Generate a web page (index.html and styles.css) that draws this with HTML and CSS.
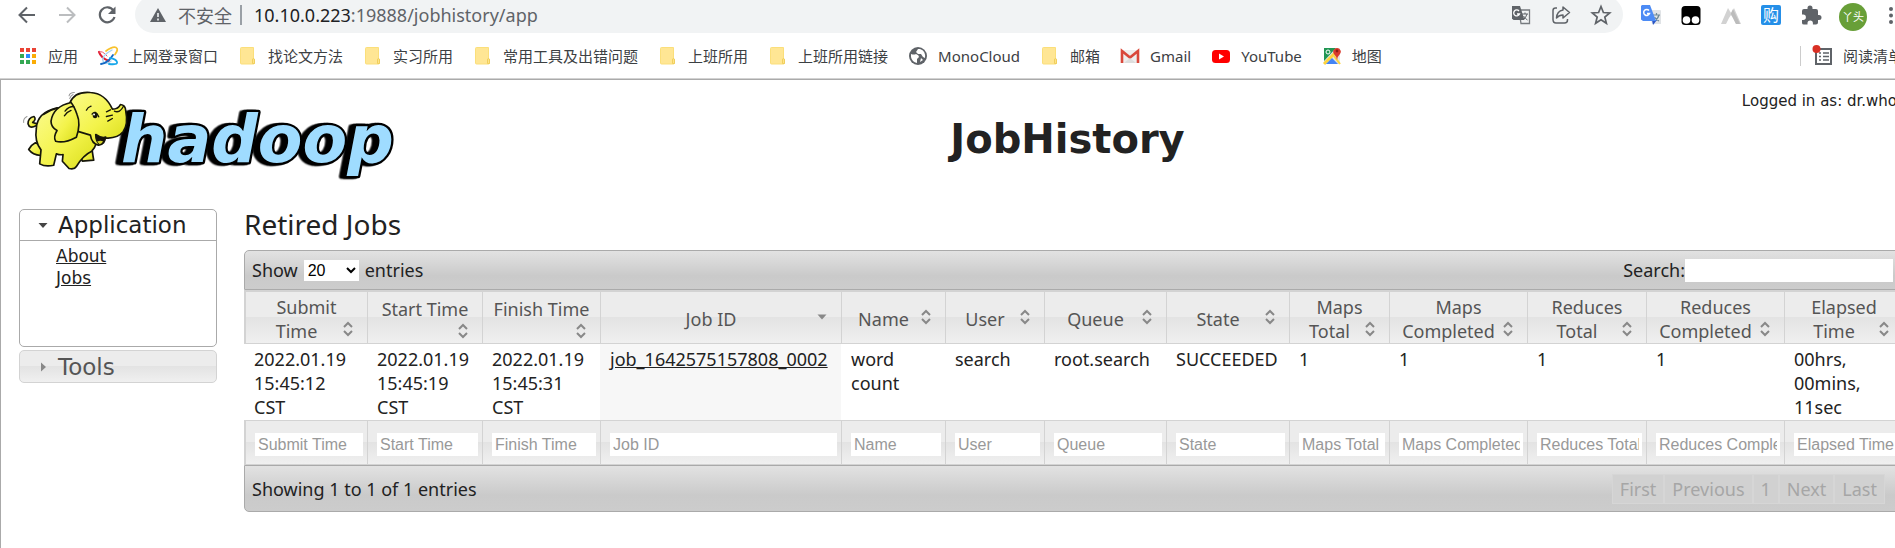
FILE: index.html
```html
<!DOCTYPE html>
<html lang="zh-CN">
<head>
<meta charset="utf-8">
<title>JobHistory</title>
<link rel="stylesheet" href="styles.css">
</head>
<body>
<svg class="sprite" aria-hidden="true">
  <symbol id="folder" viewBox="0 0 20 20"><path d="M3.500 1.500h12v11l1 1v4l-1 .500h-12q-1 0-1-1v-14.500q0-1 1-1z" fill="#ffe694" stroke="#fbdf7a"/><path d="M14.500 17.500v-3.500q0-1.500 1-1.500t1 1.500v3.500z" fill="#ffe38a" stroke="#f0cf5c"/></symbol>
  <symbol id="sort" viewBox="0 0 20 20"><path d="M6 8l4-4 4 4M6 12l4 4 4-4" fill="none" stroke="#888" stroke-width="2"/></symbol>
  <symbol id="sorted" viewBox="0 0 20 20"><path d="M5.500 7.500h9L10 12.500z" fill="#888"/></symbol>
</svg>

<div class="window">
  <header class="chrome">
    <div class="toolbar">
      <button class="icon-btn" aria-label="Back"><svg viewBox="0 0 24 24"><path d="M20 12H5M12 4.500L4.500 12l7.500 7.500" fill="none" stroke="#5f6368" stroke-width="2"/></svg></button>
      <button class="icon-btn" aria-label="Forward"><svg viewBox="0 0 24 24"><path d="M4 12h15M12 4.500l7.500 7.500-7.500 7.500" fill="none" stroke="#bbbdbf" stroke-width="2"/></svg></button>
      <button class="icon-btn" aria-label="Reload"><svg viewBox="0 0 24 24"><path d="M18.500 7.500A7.500 7.500 0 1 0 19.500 14" fill="none" stroke="#5f6368" stroke-width="2.200"/><path d="M20.500 3.500v7.500H13z" fill="#5f6368"/></svg></button>
      <div class="address">
        <svg class="warn" viewBox="0 0 16 16"><path d="M8 1l8 14H0z" fill="#5f6368"/><path d="M8 6v4M8 11.500v2" stroke="#f1f3f4" stroke-width="1.600"/></svg>
        <span class="insecure">不安全</span>
        <span class="divider"></span>
        <span class="url"><b>10.10.0.223</b>:19888/jobhistory/app</span>
        <button class="icon-btn push" aria-label="Translate"><svg viewBox="0 0 24 24"><path d="M10 7h10.500v13.500H12z" fill="#f1f3f4" stroke="#777b7f" stroke-width="1.300"/><path d="M3 3h8l4.500 14H4.500L3 15.500z" fill="#5f6368"/><path d="M10 8A3 3 0 1 0 10.500 11H8" fill="none" stroke="#fff" stroke-width="1.300"/><path d="M13 11h6M16 9.500V11M18 11q-1 4-4 6M14.500 13q2 3 4 4" fill="none" stroke="#5f6368"/></svg></button>
        <button class="icon-btn" aria-label="Share"><svg viewBox="0 0 24 24"><path d="M8 5H6.500Q4 5 4 7.500v9Q4 20 7 20h8.500q3 0 3-3v-1" fill="none" stroke="#5f6368" stroke-width="1.500"/><path d="M14 4l6.500 5.500L14 15v-3q-4 0-6.500 3Q8 8 14 7z" fill="none" stroke="#5f6368" stroke-width="1.500" stroke-linejoin="round"/></svg></button>
        <button class="icon-btn" aria-label="Bookmark"><svg viewBox="0 0 24 24"><path d="M12 3.500l2.400 6 6.300.400-4.900 4.100 1.600 6.300-5.400-3.500-5.400 3.500 1.600-6.300L3.300 9.900l6.300-.400z" fill="none" stroke="#5f6368" stroke-width="1.700"/></svg></button>
      </div>
      <div class="extensions">
        <button class="icon-btn" aria-label="Google Translate"><svg viewBox="0 0 24 24"><path d="M10 7h11q1 0 1 1v13h-9z" fill="#e0e3e6"/><path d="M14 12h7M17.500 10v2M20 12q-1 4-5 6M15.500 14q2 3 4.500 4" fill="none" stroke="#6d8a98" stroke-width="1.200"/><path d="M13 17h5l-4 5z" fill="#2b56c6"/><path d="M3 2h8l6 16H4l-2-1.500V3z" fill="#4c8bf5"/><path d="M10 7.500A3 3 0 1 0 10.500 10.500H8" fill="none" stroke="#fff" stroke-width="1.500"/></svg></button>
        <button class="icon-btn" aria-label="Tampermonkey"><svg viewBox="0 0 24 24"><rect x="2.500" y="3" width="19" height="19" rx="3.500" fill="#000"/><circle cx="7.500" cy="17" r="3.800" fill="#fff"/><circle cx="16.500" cy="17" r="3.800" fill="#fff"/></svg></button>
        <button class="icon-btn" aria-label="Extension"><svg viewBox="0 0 24 24"><path d="M2 21L9 5l3 6 3-6 7 16h-5l-3-6-2-3-2 3-3 6z" fill="#d2d2d2"/><path d="M9 5l8 16h4L14 6l-2 4z" fill="#bcbcbc"/></svg></button>
        <button class="icon-btn" aria-label="Shopping"><span class="buy">购</span></button>
        <button class="icon-btn" aria-label="Extensions"><svg viewBox="0 0 24 24"><path d="M20 12h-1V8q0-2-2-2h-3.500V5a2.500 2.500 0 0 0-5 0v1H5Q3 6 3 8v3.500h1.200a2.700 2.700 0 0 1 0 5.400H3V20q0 1.500 2 1.500h3.500v-1.200a2.700 2.700 0 0 1 5.400 0v1.200H17q2 0 2-2V17h1a2.500 2.500 0 0 0 0-5z" fill="#5f6368"/></svg></button>
        <button class="icon-btn" aria-label="Profile"><span class="avatar">丫头</span></button>
        <button class="icon-btn" aria-label="Menu"><svg viewBox="0 0 24 24"><g fill="#5f6368"><circle cx="12" cy="6" r="2"/><circle cx="12" cy="12.500" r="2"/><circle cx="12" cy="19" r="2"/></g></svg></button>
      </div>
    </div>
    <nav class="bookmarks">
      <a href="#"><svg viewBox="0 0 20 20"><g><path d="M2 2h4v4H2zM8 2h4v4H8zM14 2h4v4h-4z" fill="#ea4335"/><path d="M2 8h4v4H2zM2 14h4v4H2zM8 14h4v4H8z" fill="#34a853"/><path d="M8 8h4v4H8z" fill="#2a8cff"/><path d="M14 8h4v4h-4zM14 14h4v4h-4z" fill="#fbac05"/></g></svg>应用</a>
      <a href="#"><svg viewBox="0 0 20 20"><g fill="none" stroke-linecap="round"><path d="M1 6q2 6 10 9" stroke="#e01c34" stroke-width="2.200"/><path d="M1 6q3-2 8 4" stroke="#ee5566"/><path d="M8 5q7-5 10-3.500t-1 7" stroke="#f8c22e" stroke-width="1.800"/><path d="M14 4Q3 10 5 15t8 0" stroke="#a5d4f2" stroke-width="1.400"/><path d="M3 18q7-1 12-9" stroke="#1268c4" stroke-width="1.800"/><path d="M12 12q6 1 7 4t-8 2" stroke="#17a7ea" stroke-width="1.800"/></g></svg>上网登录窗口</a>
      <a href="#"><svg><use href="#folder"/></svg>找论文方法</a>
      <a href="#"><svg><use href="#folder"/></svg>实习所用</a>
      <a href="#"><svg><use href="#folder"/></svg>常用工具及出错问题</a>
      <a href="#"><svg><use href="#folder"/></svg>上班所用</a>
      <a href="#"><svg><use href="#folder"/></svg>上班所用链接</a>
      <a href="#"><svg viewBox="0 0 20 20"><circle cx="10" cy="10" r="9" fill="#5f6368"/><path d="M3 8q3 1 5 0 3 1 3 3l-2 2v4Q4 16 3 11zM10 3l-2 3 2 2h3l2 3 2 1q1-7-5-9zM13 12l-1 4 3-2z" fill="#fff"/></svg>MonoCloud</a>
      <a href="#"><svg><use href="#folder"/></svg>邮箱</a>
      <a href="#"><svg viewBox="0 0 20 20"><path d="M2 4h16v13H2z" fill="#eee"/><path d="M2 17V5l8 6.500L18 5v12" fill="none" stroke="#d9483b" stroke-width="2.600"/><path d="M4 17l6-5 6 5z" fill="#ddd"/></svg>Gmail</a>
      <a href="#"><svg viewBox="0 0 20 20"><rect x="1" y="4" width="18" height="13" rx="3.500" fill="#f00"/><path d="M8 7.500v6l5-3z" fill="#fff"/></svg>YouTube</a>
      <a href="#"><svg viewBox="0 0 20 20"><path d="M2 2h16v16H2z" fill="#e4e4e4"/><path d="M2 2h12L2 15z" fill="#219653"/><path d="M2 18L14 6" stroke="#fdd33c" stroke-width="3"/><path d="M4 18l6-6 6 6z" fill="#4384f4"/><path d="M12 10l6 8" stroke="#fdd33c" stroke-width="2"/><circle cx="6" cy="6" r="2" fill="none" stroke="#fff"/><path d="M15 14q0-3-3-6a3.700 3.700 0 1 1 6 0q-3 3-3 6z" fill="#d93a2c"/><circle cx="15" cy="5" r="1.400" fill="#8c1d15"/></svg>地图</a>
      <button class="reading-list"><svg viewBox="0 0 20 20"><path d="M3 3h15v15H3z" fill="none" stroke="#5f6368" stroke-width="2"/><path d="M6 7h2M10 7h6M6 10.500h2M10 10.500h6M6 14h2M10 14h6" stroke="#5f6368" stroke-width="1.600"/><circle cx="3.500" cy="3" r="4" fill="#d93025"/></svg>阅读清单</button>
    </nav>
  </header>

  <div class="page">
    <div class="masthead">
      <svg class="logo" viewBox="54 30 1130 290" role="img" aria-label="hadoop">
        <defs><linearGradient id="skin" x1="0" y1="0" x2="1" y2="1"><stop offset="0" stop-color="#fbfb8c"/><stop offset=".55" stop-color="#f3f34a"/><stop offset="1" stop-color="#d9dc18"/></linearGradient></defs>
        <text class="wordmark" x="360" y="261">hadoop</text>
        <g stroke="#16160a" stroke-width="5" fill="url(#skin)" stroke-linejoin="round" stroke-linecap="round">
          <path d="M105 152q-20 10-24-6 0-18 18-22 8 8-4 18l14 4z"/>
          <path d="M103 203q-12 6-20 20 12 16 36 18l6-30z"/>
          <path d="M250 215l20-20q4 40 8 60l-34 3-8-18z"/>
          <path d="M168 98Q108 112 106 160q-6 40 14 64l-4 42q18 10 42 4l8-34q12 4 20 2l-2 20 20 22q16 4 22-6 20-34 46-46 20-20 16-60l-40-60z"/>
          <path d="M206 84Q220 48 268 52q44 2 66 50 18 0 24-14 16 2 16 20 8 40-8 62-18 22-56 18 4 18-18 22-20-4-24-30l-40-12q-28-38-22-84z"/>
          <path d="M210 82q-54 12-60 56 0 18 18 28-12 20-4 32 24 8 62-12 14-40 2-68-8-24-18-36z"/>
          <path d="M284 178q16 12 30 8-4 18-18 22-12-10-12-30z" fill="#171208"/>
          <path d="M288 200q10-6 18-1-4 7-10 8z" fill="#d4d52a" stroke="none"/>
        </g>
        <g fill="none" stroke="#16160a" stroke-width="4" stroke-linecap="round">
          <path d="M256 105q4-9 14-12M273 117q10-14 20 8M316 110l12-6M316 124l18-4M320 138l14-8M340 108q16 8 28-16M192 108q10-14 26-14M190 122q8-12 20-16M128 118q18-14 38-18"/>
          <path d="M204 62q2-10 16-10M68 142q-2-12 10-18M206 70q4-10 10-12" stroke="#999" stroke-width="3"/>
        </g>
        <ellipse cx="282" cy="121" rx="7" ry="8" fill="#16160a"/><circle cx="279" cy="118" r="3" fill="#fff"/>
      </svg>
      <h1>JobHistory</h1>
      <div class="user">Logged in as: dr.who</div>
    </div>

    <div class="columns">
      <aside class="sidebar">
        <section class="panel">
          <h3 class="panel-title"><svg viewBox="0 0 20 20"><path d="M5.500 8h9L10 13z" fill="#454545"/></svg>Application</h3>
          <ul>
            <li><a href="#">About</a></li>
            <li><a href="#">Jobs</a></li>
          </ul>
        </section>
        <section class="panel closed">
          <h3 class="panel-title"><svg viewBox="0 0 20 20"><path d="M8 5.500v9l5-4.500z" fill="#888"/></svg>Tools</h3>
        </section>
      </aside>

      <main>
        <h2>Retired Jobs</h2>
        <div class="bar bar-top">
          <label>Show <select><option>20</option><option>40</option></select> entries</label>
          <label class="search">Search:<input type="text"></label>
        </div>
        <table>
          <colgroup><col class="w-submit"><col class="w-start"><col class="w-finish"><col class="w-id"><col class="w-name"><col class="w-user"><col class="w-queue"><col class="w-state"><col class="w-maps"><col class="w-mapsdone"><col class="w-red"><col class="w-reddone"><col class="w-elapsed"></colgroup>
          <thead>
            <tr>
              <th>Submit<br><svg><use href="#sort"/></svg>Time</th>
              <th>Start Time<br><svg><use href="#sort"/></svg></th>
              <th>Finish Time<br><svg><use href="#sort"/></svg></th>
              <th><svg><use href="#sorted"/></svg>Job ID</th>
              <th><svg><use href="#sort"/></svg>Name</th>
              <th><svg><use href="#sort"/></svg>User</th>
              <th><svg><use href="#sort"/></svg>Queue</th>
              <th><svg><use href="#sort"/></svg>State</th>
              <th>Maps<br><svg><use href="#sort"/></svg>Total</th>
              <th>Maps<br><svg><use href="#sort"/></svg>Completed</th>
              <th>Reduces<br><svg><use href="#sort"/></svg>Total</th>
              <th>Reduces<br><svg><use href="#sort"/></svg>Completed</th>
              <th>Elapsed<br><svg><use href="#sort"/></svg>Time</th>
            </tr>
          </thead>
          <tbody>
            <tr>
              <td>2022.01.19 15:45:12<br>CST</td>
              <td>2022.01.19 15:45:19<br>CST</td>
              <td>2022.01.19 15:45:31<br>CST</td>
              <td class="sorted"><a href="#">job_1642575157808_0002</a></td>
              <td>word count</td>
              <td>search</td>
              <td>root.search</td>
              <td>SUCCEEDED</td>
              <td>1</td>
              <td>1</td>
              <td>1</td>
              <td>1</td>
              <td>00hrs, 00mins, 11sec</td>
            </tr>
          </tbody>
          <tfoot>
            <tr>
              <td><input type="text" placeholder="Submit Time" aria-label="Submit Time"></td>
              <td><input type="text" placeholder="Start Time" aria-label="Start Time"></td>
              <td><input type="text" placeholder="Finish Time" aria-label="Finish Time"></td>
              <td><input type="text" placeholder="Job ID" aria-label="Job ID"></td>
              <td><input type="text" placeholder="Name" aria-label="Name"></td>
              <td><input type="text" placeholder="User" aria-label="User"></td>
              <td><input type="text" placeholder="Queue" aria-label="Queue"></td>
              <td><input type="text" placeholder="State" aria-label="State"></td>
              <td><input type="text" placeholder="Maps Total" aria-label="Maps Total"></td>
              <td><input type="text" placeholder="Maps Completed" aria-label="Maps Completed"></td>
              <td><input type="text" placeholder="Reduces Total" aria-label="Reduces Total"></td>
              <td><input type="text" placeholder="Reduces Completed" aria-label="Reduces Completed"></td>
              <td><input type="text" placeholder="Elapsed Time" aria-label="Elapsed Time"></td>
            </tr>
          </tfoot>
        </table>
        <div class="bar bar-bottom">
          <span>Showing 1 to 1 of 1 entries</span>
          <div class="pager">
            <button disabled>First</button><button disabled>Previous</button><button disabled>1</button><button disabled>Next</button><button disabled>Last</button>
          </div>
        </div>
      </main>
    </div>
  </div>
</div>
</body>
</html>
```
FILE: styles.css
```css
* { box-sizing: border-box; }
body {
  margin: 0;
  overflow: hidden;
  background: #fff;
  color: #222;
  font: 18px/24px "Noto Sans", "Noto Sans CJK SC", sans-serif;
}
button { border: 0; padding: 0; background: none; font: inherit; color: inherit; }
svg { display: block; }
.sprite { position: absolute; width: 0; height: 0; }

/* The window runs slightly past the right edge of the viewport */
.window {
  display: flex;
  flex-direction: column;
  min-height: 100vh;
  margin-right: -8px;
}

/* Browser chrome */
.chrome { margin-top: -4px; border-bottom: 1px solid #d2d2d2; }
.toolbar { display: flex; align-items: center; gap: 16px; height: 37px; padding-left: 15px; }
.icon-btn { display: grid; place-items: center; flex: none; width: 24px; height: 24px; }
.icon-btn svg { width: 24px; height: 24px; }
.address {
  display: flex;
  align-items: center;
  flex: 1;
  gap: 16px;
  height: 37px;
  padding: 0 10px 0 15px;
  border-radius: 19px;
  background: #f1f3f4;
  color: #5f6368;
}
.warn { width: 16px; height: 16px; margin-right: -4px; }
.insecure { font-family: "Noto Sans CJK SC", sans-serif; margin-right: -8px; }
.divider { width: 2px; height: 20px; background: #9aa0a6; margin-right: -4px; }
.url b { font-weight: 400; color: #202124; }
.push { margin-left: auto; }
.extensions { display: flex; gap: 16px; }
.buy {
  width: 20px;
  height: 20px;
  border-radius: 2px;
  background: #258fe8;
  color: #fff;
  font-size: 16px;
  line-height: 20px;
  text-align: center;
}
.avatar {
  width: 28px;
  height: 28px;
  border-radius: 50%;
  background: #689f38;
  color: #fff;
  font-size: 11px;
  line-height: 28px;
  text-align: center;
}
.bookmarks {
  display: flex;
  align-items: center;
  gap: 20px;
  height: 45px;
  padding-left: 18px;
  color: #3c4043;
  font-size: 15px;
  line-height: 20px;
  white-space: nowrap;
}
.bookmarks a, .reading-list { display: flex; align-items: center; gap: 10px; color: inherit; text-decoration: none; }
.bookmarks svg { width: 20px; height: 20px; overflow: visible; }
.reading-list { margin-left: auto; padding-left: 12px; border-left: 1px solid #ccc; }

/* Page */
.page {
  flex: 1;
  padding-left: 18px;
  border-top: 1px solid #aaa;
  border-left: 1px solid #aaa;
}
.masthead, .columns { display: grid; grid-template-columns: 198px 1fr; column-gap: 27px; }
.masthead { min-height: 125px; }
.logo { width: 377px; height: 97px; margin-top: 5px; overflow: visible; }
.wordmark {
  font: italic bold 195px "DejaVu Sans", sans-serif;
  fill: #9fdcff;
  stroke: #000;
  stroke-width: 14px;
  stroke-linejoin: round;
  paint-order: stroke;
  filter: drop-shadow(-8px 1px 0 #000) drop-shadow(-8px 1px 0 #000);
}
h1 {
  grid-area: 1 / 2;
  margin: 35px 12px 0 0;
  font: bold 40px/48px "DejaVu Sans", sans-serif;
  text-align: center;
}
.user {
  grid-area: 1 / 2;
  justify-self: end;
  margin: 11px 6px 0 0;
  height: 20px;
  font: 15px/20px "DejaVu Sans", sans-serif;
}

/* Sidebar */
.sidebar { padding-top: 4px; font: 17px/22px "DejaVu Sans", sans-serif; }
.panel { min-height: 138px; border: 1px solid #aaa; border-radius: 5px; }
.panel-title {
  display: flex;
  align-items: center;
  gap: 5px;
  height: 31px;
  margin: 0;
  padding-left: 13px;
  border-bottom: 1px solid #aaa;
  font-size: 23px;
  font-weight: 400;
}
.panel-title svg { width: 20px; height: 20px; }
.panel ul { margin: 0; padding: 4px 0 0 36px; list-style: none; }
a { color: #222; }
.closed {
  min-height: 0;
  margin-top: 3px;
  border-color: #d3d3d3;
  background: linear-gradient(#ececec 50%, #e3e3e3 50%, #f0f0f0);
  color: #555;
}
.closed .panel-title { border: 0; }

/* Jobs table */
main { min-width: 0; }
h2 { margin: 0 0 7px; font-size: 28px; line-height: 38px; font-weight: 400; }
.bar {
  display: flex;
  align-items: center;
  justify-content: space-between;
  border: 1px solid #aaa;
  padding: 0 9px 0 7px;
  background: linear-gradient(#e2e2e2, #cacaca 65%, #ccc);
}
.bar-top { height: 40px; border-radius: 5px 5px 0 0; }
.bar-bottom { height: 47px; border-radius: 0 0 5px 5px; }
.bar label { display: flex; align-items: center; gap: 6px; }
.bar .search { gap: 0; }
select, input {
  border: 0;
  border-radius: 0;
  background: #fff;
  color: #000;
  font: 16px/20px "Liberation Sans", sans-serif;
}
select { width: 55px; height: 21px; }
input { display: block; width: 100%; height: 23px; padding: 0 3px; }
.search input { width: 208px; }
input::placeholder { color: #999; }
table { width: 100%; table-layout: fixed; border-collapse: separate; border-spacing: 0; border-top: 1px solid #d3d3d3; }
th, td { padding: 3px 4px 1px 10px; text-align: left; vertical-align: top; }
th, tfoot td {
  border: 1px solid #d3d3d3;
  border-right: 0;
  background: linear-gradient(#ececec 50%, #e3e3e3 50%, #f0f0f0);
}
th:first-child, tfoot td:first-child { border-left-width: 2px; }
th { height: 53px; padding: 2px 9px 0; color: #555; font-weight: 400; text-align: center; vertical-align: middle; }
th svg { float: right; width: 20px; height: 20px; }
tfoot td { height: 45px; padding: 12px 4px 8px 9px; }
.sorted { background: #f7f7f7; }
.pager { display: flex; margin-right: 8px; color: #a6a6a6; }
.pager button { height: 30px; padding: 0 7px; border: 1px solid #d6d6d6; background: #d1d1d1; }
.w-submit { width: 123px; }
.w-start { width: 115px; }
.w-finish { width: 118px; }
.w-id { width: 241px; }
.w-name { width: 104px; }
.w-user { width: 99px; }
.w-queue { width: 122px; }
.w-state { width: 123px; }
.w-maps { width: 100px; }
.w-mapsdone { width: 138px; }
.w-red { width: 119px; }
.w-reddone { width: 138px; }
.w-elapsed { width: 119px; }
```
